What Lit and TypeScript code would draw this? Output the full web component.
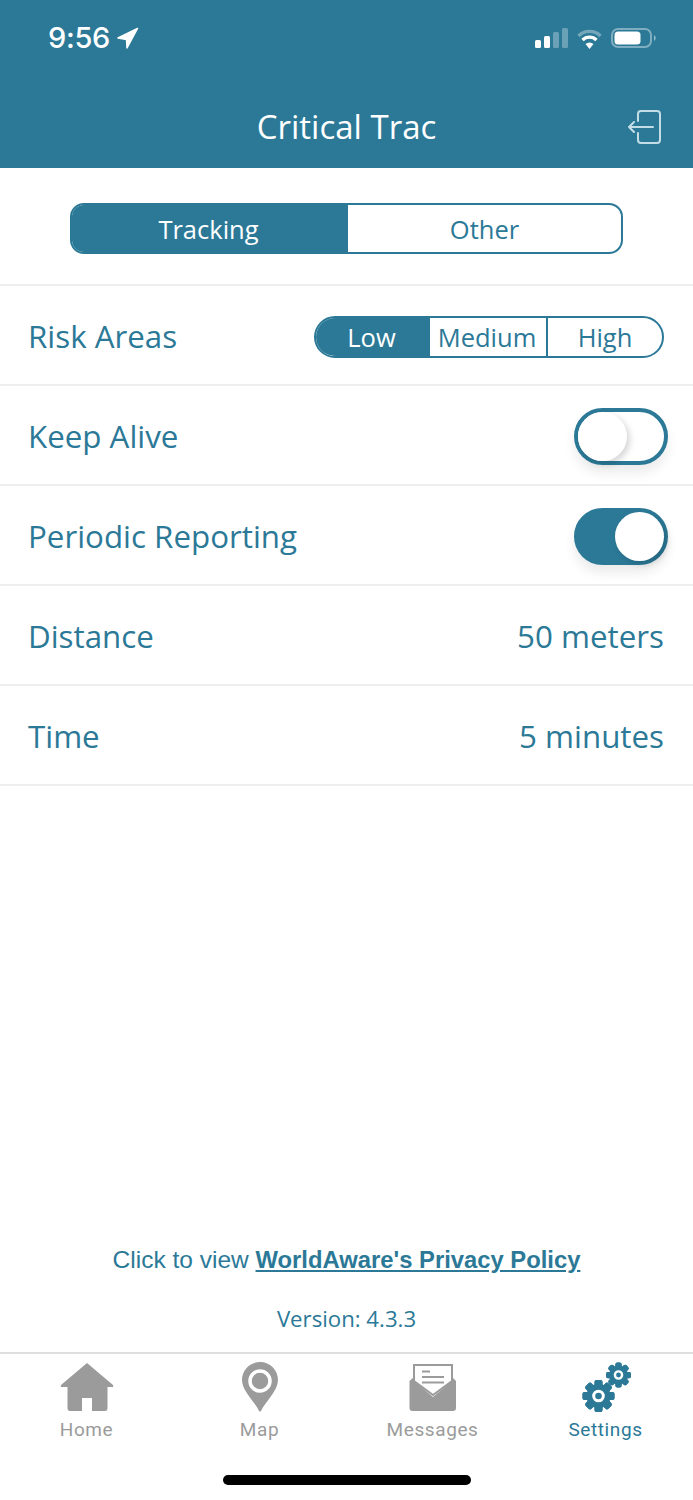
import { LitElement, html, css, svg } from 'lit';
import { customElement } from 'lit/decorators.js';

const TEAL = '#2b7997';

const gear = (cx: number, cy: number, r: number, ring: number, sw: number) => {
  const teeth = [0, 45, 90, 135, 180, 225, 270, 315].map(
    (a) => svg`<rect x=${cx - r * 0.25} y=${cy - r} width=${r * 0.5} height=${r * 2} rx="2" transform="rotate(${a} ${cx} ${cy})"></rect>`
  );
  return svg`
    <g fill=${TEAL}>
      ${teeth}
      <circle cx=${cx} cy=${cy} r=${r * 0.76}></circle>
    </g>
    <circle cx=${cx} cy=${cy} r=${ring} fill=${TEAL} stroke="#fff" stroke-width=${sw}></circle>
  `;
};

@customElement('app-root')
export class AppRoot extends LitElement {
  static styles = css`
    :host {
      display: block;
      width: 693px;
      height: 1500px;
      background: #fff;
      color: #2b7997;
      font-family: 'Open Sans', sans-serif;
      overflow: hidden;
    }

    .page {
      display: flex;
      flex-direction: column;
      height: 1500px;
    }

    .header {
      background: #2b7997;
      height: 168px;
      flex: none;
      color: #fff;
      display: flex;
      flex-direction: column;
    }

    .status {
      height: 75px;
      display: flex;
      align-items: center;
      justify-content: space-between;
      padding: 0 36px 0 48px;
    }

    .time {
      display: flex;
      align-items: center;
      gap: 7px;
      font-family: Inter, sans-serif;
      font-size: 29px;
      font-weight: 500;
      letter-spacing: -0.3px;
    }

    .status-icons {
      display: flex;
      align-items: center;
      gap: 9px;
    }

    .navbar {
      display: grid;
      grid-template-columns: 1fr auto 1fr;
      align-items: center;
      height: 54px;
      margin-top: 25px;
    }

    .title {
      font-size: 33px;
      line-height: 54px;
    }

    .exit {
      justify-self: end;
      display: block;
      margin-right: 30px;
    }

    .tabs-wrap {
      height: 118px;
      flex: none;
      display: flex;
      justify-content: center;
      align-items: flex-start;
      padding-top: 35px;
      box-sizing: border-box;
      border-bottom: 2px solid #eeeeee;
    }

    .tabs {
      display: flex;
      width: 553px;
      height: 51px;
      box-sizing: border-box;
      border: 2px solid #2b7997;
      border-radius: 14px;
      overflow: hidden;
      font-size: 25.5px;
    }

    .tabs div {
      flex: 1;
      display: flex;
      align-items: center;
      justify-content: center;
    }

    .tabs .on {
      padding-right: 3px;
    }

    .on {
      background: #2b7997;
      color: #fff;
    }

    .row {
      height: 100px;
      flex: none;
      box-sizing: border-box;
      display: flex;
      align-items: center;
      justify-content: space-between;
      padding: 1px 29px 0 28px;
      border-bottom: 2px solid #eeeeee;
      font-size: 31.3px;
    }

    .segment {
      display: flex;
      width: 350px;
      height: 42px;
      margin-top: 2px;
      box-sizing: border-box;
      border: 2px solid #2b7997;
      border-radius: 21px;
      overflow: hidden;
      font-size: 25.5px;
    }

    .segment div {
      display: flex;
      align-items: center;
      justify-content: center;
    }

    .segment .low { width: 114px; padding-right: 3px; box-sizing: border-box; }
    .segment .medium { width: 118px; padding-right: 2px; box-sizing: border-box; border-right: 2px solid #2b7997; }
    .segment .high { flex: 1; }

    .toggle {
      position: relative;
      width: 94px;
      height: 57px;
      margin: 2px -4px 0 0;
      box-sizing: border-box;
      border: 4px solid #2b7997;
      border-radius: 29px;
      box-shadow: 0 8px 12px rgba(0, 0, 0, 0.08);
    }

    .toggle.active {
      background: #2b7997;
    }

    .knob {
      position: absolute;
      top: 0;
      left: 0;
      width: 49px;
      height: 49px;
      border-radius: 50%;
      background: #fff;
      box-shadow: 3px 3px 6px rgba(0, 0, 0, 0.16);
    }

    .toggle.active .knob {
      left: 37px;
    }

    .spacer {
      flex: 1;
    }

    .policy {
      text-align: center;
      font-family: 'Liberation Sans', Arial, sans-serif;
      font-size: 24.5px;
      line-height: 28px;
    }

    .policy a {
      color: inherit;
      font-size: 23.8px;
      font-weight: 700;
      text-decoration: underline;
    }

    .version {
      text-align: center;
      font-size: 22.2px;
      line-height: 30px;
      margin-top: 30px;
      margin-bottom: 18px;
    }

    .tabbar {
      flex: none;
      height: 148px;
      box-sizing: border-box;
      border-top: 2px solid #dedede;
      position: relative;
      display: grid;
      grid-template-columns: repeat(4, 173px);
      padding-top: 8px;
    }

    .tab-item {
      display: flex;
      flex-direction: column;
      align-items: center;
      color: #9b9b9b;
      font-family: Roboto, sans-serif;
      font-size: 19px;
      letter-spacing: 0.6px;
      gap: 6px;
    }

    .tab-item.current {
      color: #2b7997;
    }

    .tab-item svg {
      display: block;
    }

    .home-bar {
      position: absolute;
      left: 223px;
      bottom: 15px;
      width: 248px;
      height: 10px;
      border-radius: 5px;
      background: #000;
    }
  `;

  render() {
    return html`
      <div class="page">
        <div class="header">
          <div class="status">
            <div class="time">
              <span>9:56</span>
              <svg width="22" height="22" viewBox="0 0 22 22"><path d="M20.5 1.5 L1 11 L9.5 12.5 L10 21 Z" fill="#fff" stroke="#fff" stroke-width="1.5" stroke-linejoin="round"></path></svg>
            </div>
            <div class="status-icons">
              <svg width="33" height="20" viewBox="0 0 33 20">
                <rect x="0" y="12" width="6" height="8" rx="1.5" fill="#fff"></rect>
                <rect x="9" y="8" width="6" height="12" rx="1.5" fill="#fff"></rect>
                <rect x="18" y="4" width="6" height="16" rx="1.5" fill="#fff" opacity=".3"></rect>
                <rect x="27" y="0" width="6" height="20" rx="1.5" fill="#fff" opacity=".3"></rect>
              </svg>
              <svg width="25" height="22" viewBox="0 0 25 22" fill="none" stroke="#fff" stroke-width="3.4">
                <path d="M1.5 9 A15.5 15.5 0 0 1 23.5 9" opacity=".35"></path>
                <path d="M5.5 13 A10 10 0 0 1 19.5 13"></path>
                <path d="M12.5 22 L8.5 17 A6 6 0 0 1 16.5 17 Z" fill="#fff" stroke="none"></path>
              </svg>
              <svg width="46" height="20" viewBox="0 0 46 20">
                <rect x="1" y="1" width="39" height="18" rx="6" fill="none" stroke="#fff" stroke-opacity=".4" stroke-width="2"></rect>
                <rect x="3.5" y="3.5" width="26" height="13" rx="3.5" fill="#fff"></rect>
                <path d="M43 7 A3.5 3.5 0 0 1 43 13 Z" fill="#fff" fill-opacity=".5"></path>
              </svg>
            </div>
          </div>
          <div class="navbar">
            <span></span>
            <span class="title">Critical Trac</span>
            <svg class="exit" width="36" height="36" viewBox="0 0 36 36" fill="none" stroke="#c3dde7" stroke-width="2" stroke-linecap="round" stroke-linejoin="round">
              <path d="M11 12 V5 Q11 2 14 2 H30 Q33 2 33 5 V31 Q33 34 30 34 H14 Q11 34 11 31 V24"></path>
              <path d="M26 18 H2 M7 13 L2 18 L7 23"></path>
            </svg>
          </div>
        </div>

        <div class="tabs-wrap">
          <div class="tabs">
            <div class="on">Tracking</div>
            <div>Other</div>
          </div>
        </div>

        <div class="row">
          <span>Risk Areas</span>
          <div class="segment">
            <div class="low on">Low</div>
            <div class="medium">Medium</div>
            <div class="high">High</div>
          </div>
        </div>
        <div class="row">
          <span>Keep Alive</span>
          <div class="toggle"><div class="knob"></div></div>
        </div>
        <div class="row">
          <span>Periodic Reporting</span>
          <div class="toggle active"><div class="knob"></div></div>
        </div>
        <div class="row"><span>Distance</span><span>50 meters</span></div>
        <div class="row"><span>Time</span><span>5 minutes</span></div>

        <div class="spacer"></div>

        <div class="policy">Click to view <a>WorldAware's Privacy Policy</a></div>
        <div class="version">Version: 4.3.3</div>

        <div class="tabbar">
          <div class="tab-item">
            <svg width="54" height="50" viewBox="0 0 54 50">
              <path d="M27 1 L53 23 Q54 25 52 25 H47.5 V46 Q47.5 49 45 49 H32 V36 H22 V49 H10 Q7.5 49 7.5 46 V25 H2 Q0 25 1 23 Z" fill="#9b9b9b"></path>
            </svg>
            <span>Home</span>
          </div>
          <div class="tab-item">
            <svg width="54" height="50" viewBox="0 0 54 50">
              <path d="M27 0 C37 0 45 8 45 18 C45 29 32 40 28 49 Q27 50 26 49 C22 40 9 29 9 18 C9 8 17 0 27 0 Z" fill="#9b9b9b"></path>
              <circle cx="27" cy="19" r="10" fill="none" stroke="#fff" stroke-width="3.5"></circle>
            </svg>
            <span>Map</span>
          </div>
          <div class="tab-item">
            <svg width="54" height="50" viewBox="0 0 54 50">
              <path d="M3.5 19 L8 15 V19 L27 35 L46 19 V15 L50 19 V46 Q50 49 47 49 H6.5 Q3.5 49 3.5 46 Z" fill="#9b9b9b"></path>
              <path d="M8 3 H46 V19 L27 33 L8 19 Z" fill="#fff" stroke="#9b9b9b" stroke-width="2"></path>
              <path d="M16 9.5 H24 M16 15 H38 M16 20.5 H38" stroke="#9b9b9b" stroke-width="2.2"></path>
            </svg>
            <span>Messages</span>
          </div>
          <div class="tab-item current">
            <svg width="54" height="50" viewBox="0 0 54 50">
              ${gear(19.5, 34, 16, 4.8, 3)}
              ${gear(39.5, 13, 12.5, 3.6, 2.4)}
            </svg>
            <span>Settings</span>
          </div>
          <div class="home-bar"></div>
        </div>
      </div>
    `;
  }
}
